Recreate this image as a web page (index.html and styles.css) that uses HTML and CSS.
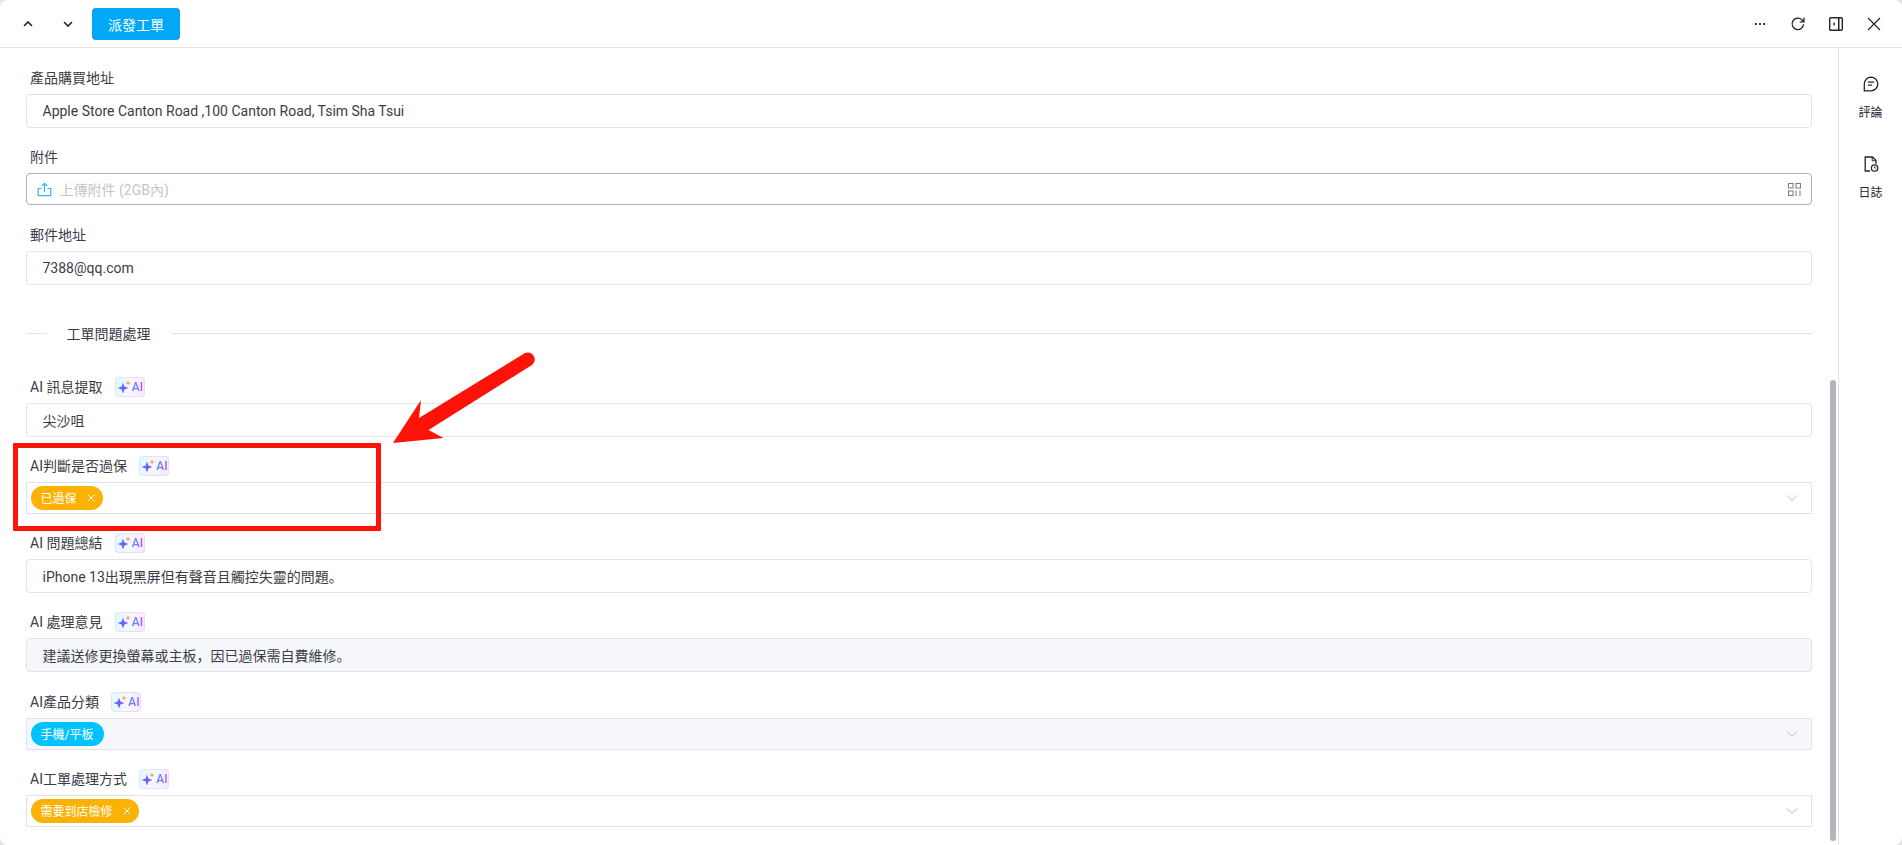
FILE: index.html
```html
<!DOCTYPE html>
<html>
<head>
  <meta charset="UTF-8" />
  <meta name="viewport" content="width=device-width, initial-scale=1.0" />
  <title>工單詳情</title>
  <link rel="stylesheet" href="styles.css">
</head>
<body>

<svg class="defs" width="0" height="0">
  <defs>
    <linearGradient id="sparkGrad" x1="0" y1="0" x2="1" y2="1">
      <stop offset="0" stop-color="#2f8dff"/>
      <stop offset="1" stop-color="#a23cf5"/>
    </linearGradient>
    <symbol id="spark" viewBox="0 0 14 14">
      <path d="M6 2.6 7.4 6.600 11.400 8 7.400 9.400 6 13.400 4.600 9.400 .6 8 4.600 6.600Z" fill="url(#sparkGrad)"/>
      <path d="M11 .4 11.700 2.300 13.600 3 11.700 3.700 11 5.600 10.300 3.700 8.400 3 10.300 2.300Z" fill="#ff9d3c"/>
    </symbol>
    <symbol id="chevron" viewBox="0 0 12 12">
      <path d="M1 3.5 6 8.5 11 3.5" fill="none" stroke="currentColor" stroke-width="1"/>
    </symbol>
    <symbol id="close" viewBox="0 0 10 10">
      <path d="M1.5 1.5 8.5 8.5M8.5 1.5 1.5 8.5" fill="none" stroke="currentColor" stroke-width="1"/>
    </symbol>
  </defs>
</svg>

<div class="window">
  <header class="topbar">
    <div class="topbar-left">
      <button class="icon-btn">
        <svg width="14" height="14" viewBox="0 0 14 14"><path d="M3 9 7 5 11 9" fill="none" stroke="#22252d" stroke-width="1.6"/></svg>
      </button>
      <button class="icon-btn">
        <svg width="14" height="14" viewBox="0 0 14 14"><path d="M3 5 7 9 11 5" fill="none" stroke="#22252d" stroke-width="1.6"/></svg>
      </button>
      <button class="primary-btn">派發工單</button>
    </div>
    <div class="topbar-right">
      <button class="icon-btn wide">
        <svg width="14" height="14" viewBox="0 0 14 14"><g fill="#33363f"><rect x="2" y="6" width="2" height="2"/><rect x="6" y="6" width="2" height="2"/><rect x="10" y="6" width="2" height="2"/></g></svg>
      </button>
      <button class="icon-btn wide">
        <svg width="16" height="16" viewBox="0 0 16 16"><path d="M13.5 8.2A5.7 5.7 0 1 1 11.6 3.6L13.8 5.6" fill="none" stroke="#22252d" stroke-width="1.3"/><path d="M14 1.6V5.9H9.8" fill="none" stroke="#22252d" stroke-width="1.3"/></svg>
      </button>
      <button class="icon-btn wide">
        <svg width="16" height="16" viewBox="0 0 16 16"><rect x="1.7" y="1.7" width="12.6" height="12.6" rx="1" fill="none" stroke="#22252d" stroke-width="1.4"/><rect x="10" y="2" width="1.5" height="12" fill="#22252d"/><path d="M5.5 6 7.5 8 5.5 10Z" fill="#22252d"/></svg>
      </button>
      <button class="icon-btn wide">
        <svg width="16" height="16" viewBox="0 0 16 16"><path d="M2 2 14 14M14 2 2 14" fill="none" stroke="#22252d" stroke-width="1.2"/></svg>
      </button>
    </div>
  </header>

  <div class="body">
    <main class="content">
      <div class="field">
        <label class="label">產品購買地址</label>
        <div class="input">Apple Store Canton Road ,100 Canton Road, Tsim Sha Tsui</div>
      </div>

      <div class="field">
        <label class="label">附件</label>
        <div class="input upload">
          <svg class="upload-icon" width="15" height="15" viewBox="0 0 15 15"><path d="M7.5 10V1.5M4.8 4 7.5 1.3 10.2 4" fill="none" stroke="#38b3f5" stroke-width="1.2"/><path d="M4.5 6.5H1.2V13.7H13.8V6.5H10.5" fill="none" stroke="#38b3f5" stroke-width="1.2"/></svg>
          <span class="placeholder">上傳附件 (2GB內)</span>
          <svg class="qr-icon" width="13" height="13" viewBox="0 0 13 13"><g fill="none" stroke="#777a84" stroke-width="1"><rect x=".5" y=".5" width="4.5" height="4.5"/><rect x="8" y=".5" width="4.5" height="4.5"/><rect x=".5" y="8" width="4.5" height="4.5"/></g><path d="M8 7.5v5.500M12 7.500v5.500" stroke="#777a84"/></svg>
        </div>
      </div>

      <div class="field">
        <label class="label">郵件地址</label>
        <div class="input">7388@qq.com</div>
      </div>

      <div class="divider"><span>工單問題處理</span></div>

      <div class="field">
        <label class="label">AI 訊息提取 <span class="ai-badge"><svg width="14" height="14"><use href="#spark"/></svg><b>AI</b></span></label>
        <div class="input">尖沙咀</div>
      </div>

      <div class="field">
        <label class="label">AI判斷是否過保 <span class="ai-badge"><svg width="14" height="14"><use href="#spark"/></svg><b>AI</b></span></label>
        <div class="input select">
          <span class="tag amber">已過保<svg width="10" height="10"><use href="#close"/></svg></span>
          <svg class="select-arrow" width="12" height="12"><use href="#chevron"/></svg>
        </div>
      </div>

      <div class="field">
        <label class="label">AI 問題總結 <span class="ai-badge"><svg width="14" height="14"><use href="#spark"/></svg><b>AI</b></span></label>
        <div class="input">iPhone 13出現黑屏但有聲音且觸控失靈的問題。</div>
      </div>

      <div class="field">
        <label class="label">AI 處理意見 <span class="ai-badge"><svg width="14" height="14"><use href="#spark"/></svg><b>AI</b></span></label>
        <div class="input disabled">建議送修更換螢幕或主板，因已過保需自費維修。</div>
      </div>

      <div class="field">
        <label class="label">AI產品分類 <span class="ai-badge"><svg width="14" height="14"><use href="#spark"/></svg><b>AI</b></span></label>
        <div class="input select disabled">
          <span class="tag cyan">手機/平板</span>
          <svg class="select-arrow" width="12" height="12"><use href="#chevron"/></svg>
        </div>
      </div>

      <div class="field">
        <label class="label">AI工單處理方式 <span class="ai-badge"><svg width="14" height="14"><use href="#spark"/></svg><b>AI</b></span></label>
        <div class="input select">
          <span class="tag amber">需要到店檢修<svg width="10" height="10"><use href="#close"/></svg></span>
          <svg class="select-arrow" width="12" height="12"><use href="#chevron"/></svg>
        </div>
      </div>

      <div class="scroll-thumb"></div>
    </main>

    <aside class="side">
      <div class="side-item">
        <svg width="18" height="18" viewBox="0 0 18 18"><path d="M9 2.2A6.800 6.800 0 1 1 9 15.800H2.300V9A6.800 6.800 0 0 1 9 2.200Z" fill="none" stroke="#22252d" stroke-width="1.300"/><path d="M5.800 7.200H12.200M5.800 10.200H10.200" stroke="#22252d" stroke-width="1.300"/></svg>
        <span>評論</span>
      </div>
      <div class="side-item">
        <svg width="18" height="18" viewBox="0 0 18 18"><path d="M8 16H3.200V2H10.500L14 5.500V9" fill="none" stroke="#22252d" stroke-width="1.300"/><path d="M10.200 2V5.800H14" fill="none" stroke="#22252d" stroke-width="1"/><circle cx="12.600" cy="13" r="3.200" fill="none" stroke="#22252d" stroke-width="1.300"/><path d="M12.600 11.600V13H14" fill="none" stroke="#22252d"/></svg>
        <span>日誌</span>
      </div>
    </aside>
  </div>

  <!-- 標註：紅框與箭頭 -->
  <div class="mark-box"></div>
  <svg class="mark-arrow" width="160" height="100" viewBox="0 0 160 100">
    <path d="M133 10 27 75 29 57 1 100 51.500 95 36.500 87 140 22A7 7 0 0 0 133 10Z" fill="#ff1208"/>
  </svg>
</div>

</body>
</html>
```

FILE: styles.css
```css
* {
  box-sizing: border-box;
}
html, body {
  margin: 0;
  height: 100%;
  overflow: hidden;
}
body {
  font-family: Roboto, "Noto Sans CJK SC", sans-serif;
  font-size: 14px;
  color: #3a3d47;
  background: #e4e4ea;
}
.defs {
  position: absolute;
}
.window {
  position: relative;
  height: 845px;
  background: #fff;
  border-radius: 8px;
  overflow: hidden;
}

/* 頂部工具列 */
.topbar {
  height: 48px;
  display: flex;
  align-items: center;
  justify-content: space-between;
  padding: 0 9px 0 12px;
  border-bottom: 1px solid #e2e2e8;
}
.topbar-left, .topbar-right {
  display: flex;
  align-items: center;
}
.icon-btn {
  width: 32px;
  height: 32px;
  padding: 0;
  border: none;
  background: none;
  display: flex;
  align-items: center;
  justify-content: center;
  margin-right: 8px;
}
.icon-btn.wide {
  width: 38px;
  margin-right: 0;
}
.primary-btn {
  width: 88px;
  height: 32px;
  border: none;
  border-radius: 4px;
  background: #00a8f7;
  color: #fff;
  font: inherit;
}

.body {
  display: flex;
  height: 797px;
}
.content {
  position: relative;
  flex: 1;
  padding: 19px 26px 0 25.5px;
  overflow: hidden;
}
.scroll-thumb {
  position: absolute;
  top: 332px;
  right: 2px;
  width: 6px;
  height: 461px;
  border-radius: 3px;
  background: #b4b5ba;
}

.field {
  margin-bottom: 18.25px;
}
.label {
  display: flex;
  align-items: center;
  height: 22px;
  margin-bottom: 5px;
  padding-left: 4.5px;
  line-height: 22px;
  white-space: pre;
}
.ai-badge {
  display: inline-flex;
  align-items: center;
  justify-content: center;
  gap: 1px;
  width: 30px;
  height: 20px;
  margin-left: 9px;
  border: 1px solid transparent;
  border-radius: 4px;
  background:
    linear-gradient(100deg, #e3f7ff, #f8f6ff 50%, #f8e8ff) padding-box,
    linear-gradient(100deg, #cdeefc, #eed8fb) border-box;
}
.ai-badge b {
  font-size: 12px;
  font-weight: 500;
  background: linear-gradient(90deg, #3f95ff, #b652f5);
  -webkit-background-clip: text;
  background-clip: text;
  color: transparent;
}

.input {
  position: relative;
  display: flex;
  align-items: center;
  height: 34px;
  padding: 0 16px;
  border: 1px solid #e2e2e8;
  border-radius: 4px;
  background: #fff;
}
.input.disabled {
  background: #f6f7fb;
}
.input.select {
  height: 32px;
  padding: 0 4px;
  border-radius: 1px;
}
.input.upload {
  height: 32px;
  padding: 0 10px;
  border-color: #aeb0b8;
}
.upload-icon {
  margin-right: 8px;
}
.placeholder {
  flex: 1;
  color: #c3c5cc;
}
.select-arrow {
  position: absolute;
  right: 13px;
  top: 9px;
  color: #b6b8be;
}

.tag {
  display: inline-flex;
  align-items: center;
  gap: 9px;
  height: 24px;
  padding: 0 7px 0 10px;
  border-radius: 12px;
  color: #fff;
  font-size: 12px;
}
.tag.amber {
  background: #fbb205;
}
.tag.cyan {
  background: #00c2ff;
  padding-right: 11px;
}

.divider {
  display: flex;
  align-items: center;
  gap: 20px;
  height: 22px;
  margin: 37.5px 0 31.5px;
}
.divider::before, .divider::after {
  content: "";
  height: 1px;
  background: #e2e2e8;
}
.divider::before {
  width: 21px;
}
.divider::after {
  flex: 1;
}

.side {
  width: 64px;
  flex: none;
  border-left: 1px solid #e2e2e8;
  padding-top: 27px;
  display: flex;
  flex-direction: column;
  gap: 34px;
}
.side-item {
  display: flex;
  flex-direction: column;
  align-items: center;
  gap: 12px;
  font-size: 12px;
  line-height: 16px;
  color: #22252d;
}

.mark-box {
  position: absolute;
  left: 13px;
  top: 443px;
  width: 368px;
  height: 88px;
  border: 5px solid #ff1208;
  border-radius: 1px;
}
.mark-arrow {
  position: absolute;
  left: 392px;
  top: 343px;
}
```
